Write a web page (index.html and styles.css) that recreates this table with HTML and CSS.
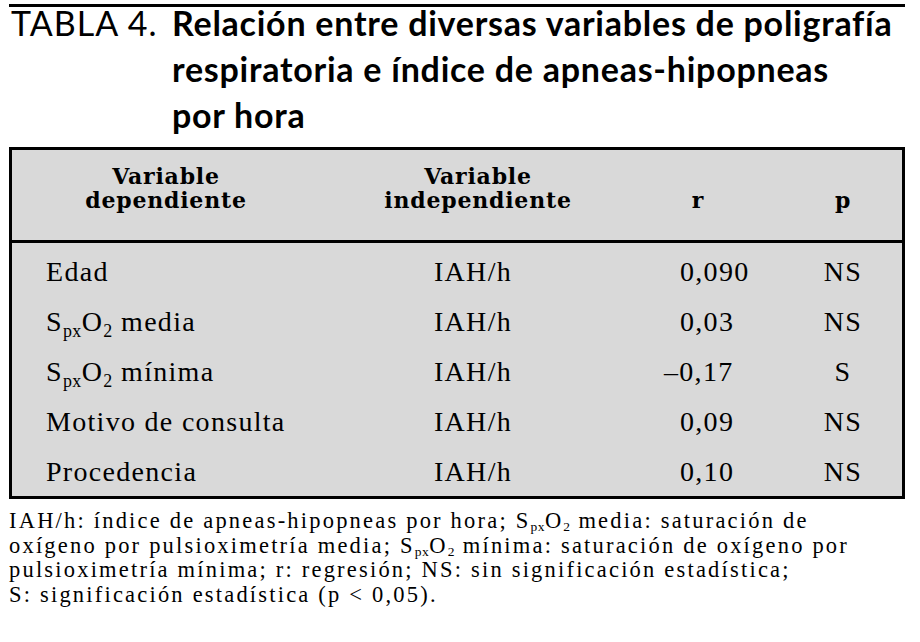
FILE: index.html
```html
<!DOCTYPE html>
<html lang="es">
<head>
<meta charset="utf-8">
<title>Tabla 4</title>
<link rel="stylesheet" href="styles.css">
</head>
<body>
<div class="page">
  <div class="title">
    <div class="title-inner">
      <span class="title-label">TABLA 4.</span>
      <h1 class="title-text">Relación entre diversas variables de poligrafía<br>respiratoria e índice de apneas-hipopneas<br>por hora</h1>
    </div>
  </div>
  <div class="table">
    <div class="thead">
      <div class="th">Variable<br>dependiente</div>
      <div class="th">Variable<br>independiente</div>
      <div class="th">r</div>
      <div class="th th-p">p</div>
    </div>
    <div class="tbody">
      <div class="row">
        <div class="td td-name">Edad</div>
        <div class="td td-ind">IAH/h</div>
        <div class="td td-r">0,090</div>
        <div class="td td-p">NS</div>
      </div>
      <div class="row">
        <div class="td td-name">S<span class="sub">px</span>O<span class="sub">2</span> media</div>
        <div class="td td-ind">IAH/h</div>
        <div class="td td-r">0,03</div>
        <div class="td td-p">NS</div>
      </div>
      <div class="row">
        <div class="td td-name">S<span class="sub">px</span>O<span class="sub">2</span> mínima</div>
        <div class="td td-ind">IAH/h</div>
        <div class="td td-r"><span class="neg">–</span>0,17</div>
        <div class="td td-p">S</div>
      </div>
      <div class="row">
        <div class="td td-name">Motivo de consulta</div>
        <div class="td td-ind">IAH/h</div>
        <div class="td td-r">0,09</div>
        <div class="td td-p">NS</div>
      </div>
      <div class="row">
        <div class="td td-name">Procedencia</div>
        <div class="td td-ind">IAH/h</div>
        <div class="td td-r">0,10</div>
        <div class="td td-p">NS</div>
      </div>
    </div>
  </div>
  <p class="note">IAH/h: índice de apneas-hipopneas por hora; S<span class="sub">px</span>O<span class="sub">2</span> media: saturación de<br>oxígeno por pulsioximetría media; S<span class="sub">px</span>O<span class="sub">2</span> mínima: saturación de oxígeno por<br>pulsioximetría mínima; r: regresión; NS: sin significación estadística;<br>S: significación estadística (p &lt; 0,05).</p>
</div>
</body>
</html>
```

FILE: styles.css
```css
html, body {
  margin: 0;
  padding: 0;
  background: #ffffff;
}

.page {
  width: 896px;
  margin-left: 9px;
  padding-top: 4px;
  color: #000;
}

.title {
  border-top: 3px solid #000;
  padding-bottom: 9px;
}

.title-inner {
  display: flex;
  margin-top: -7px;
  font-family: "Lato", "Open Sans", sans-serif;
  font-size: 34px;
  line-height: 46px;
}

.title-label {
  flex: 0 0 163px;
  font-weight: 400;
  letter-spacing: 1px;
  padding-left: 2px;
  box-sizing: border-box;
}

.title-text {
  margin: 0;
  font-size: 34px;
  font-weight: 700;
  letter-spacing: 0.75px;
  white-space: nowrap;
}

.table {
  border: 3px solid #000;
  background: #d9d9d9;
}

.thead,
.row {
  display: grid;
  grid-template-columns: 308px 316px 124px 142px;
}

.thead {
  border-bottom: 3px solid #000;
  padding: 14px 0 28px;
  align-items: end;
}

.th {
  font-family: "DejaVu Serif", serif;
  font-weight: 700;
  font-size: 22px;
  line-height: 24px;
  letter-spacing: 0.8px;
  text-align: center;
}

.th-p {
  padding-left: 24px;
}

.tbody {
  padding-top: 4px;
  height: 249px;
}

.row {
  height: 50px;
  align-items: center;
}

.td {
  font-family: "Liberation Serif", serif;
  font-size: 28px;
  letter-spacing: 1.3px;
  line-height: 30px;
  white-space: nowrap;
}

.td-name {
  padding-left: 34px;
}

.td-ind {
  text-align: center;
  padding-right: 10px;
}

.td-r {
  padding-left: 44px;
}

.neg {
  margin-left: -16px;
}

.td-p {
  text-align: center;
  padding-left: 24px;
}

.sub {
  font-size: 0.64em;
  letter-spacing: 0.5px;
  vertical-align: -0.34em;
  line-height: 0;
}

.note {
  margin: 10px 0 0;
  font-family: "Liberation Serif", serif;
  font-size: 22.5px;
  line-height: 24.5px;
  letter-spacing: 2.2px;
  white-space: nowrap;
}

.note .sub {
  font-size: 0.6em;
  vertical-align: -0.22em;
}
```
